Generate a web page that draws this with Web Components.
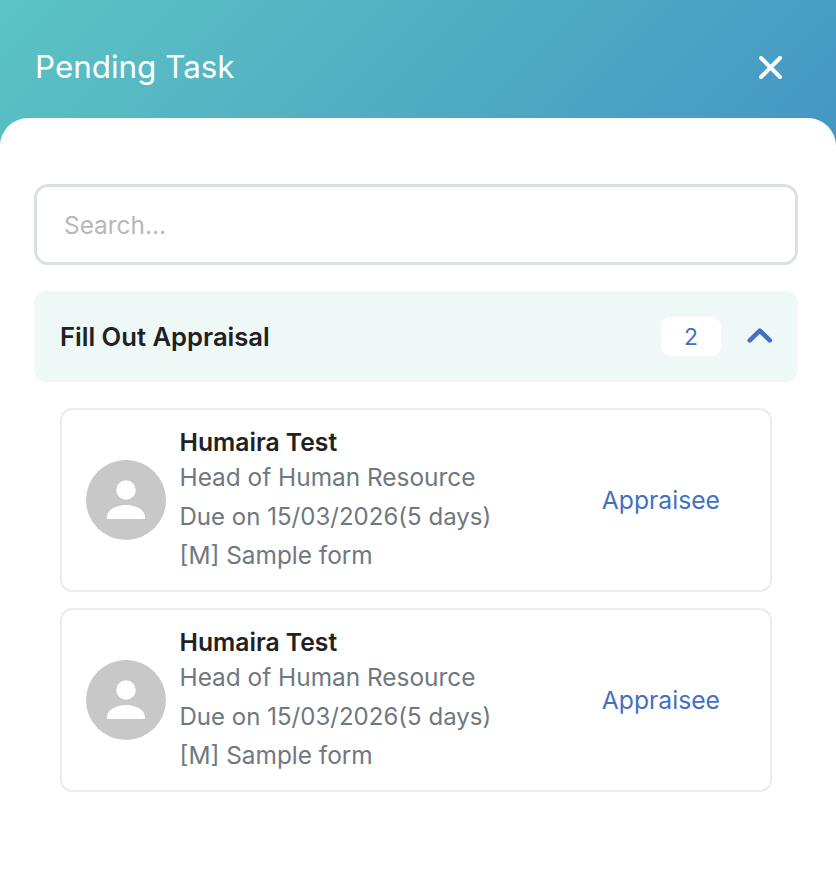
<!DOCTYPE html>
<html lang="en">
<head>
<meta charset="utf-8">
<title>Pending Task</title>
<style>
  html, body { margin: 0; background: #fff; }
  body { font-family: "Inter", "Noto Sans", sans-serif; }
</style>
</head>
<body>
<pending-panel>
  <task-group title="Fill Out Appraisal" count="2">
    <task-card name="Humaira Test" job="Head of Human Resource" due="Due on 15/03/2026(5 days)" form="[M] Sample form" role="Appraisee"></task-card>
    <task-card name="Humaira Test" job="Head of Human Resource" due="Due on 15/03/2026(5 days)" form="[M] Sample form" role="Appraisee"></task-card>
  </task-group>
</pending-panel>

<script>
const FONT = '"Inter", "Noto Sans", sans-serif';

class TaskCard extends HTMLElement {
  constructor() {
    super();
    this.attachShadow({ mode: 'open' });
  }

  connectedCallback() {
    this.render();
  }

  render() {
    const name = this.getAttribute('name') || '';
    const job = this.getAttribute('job') || '';
    const due = this.getAttribute('due') || '';
    const form = this.getAttribute('form') || '';
    const role = this.getAttribute('role') || '';

    this.shadowRoot.innerHTML = `
      <style>
        :host {
          display: block;
        }

        .card {
          box-sizing: border-box;
          height: 184px;
          display: flex;
          align-items: center;
          padding: 0 50px 0 24px;
          background: #fff;
          border: 2px solid #ececec;
          border-radius: 12px;
        }

        .avatar {
          flex: none;
          width: 80px;
          height: 80px;
          margin-right: 13.500px;
        }

        .info {
          flex: 1;
          min-width: 0;
          color: #6f777f;
          font-size: 24.4px;
          line-height: 39px;
        }

        .name {
          color: #1f2123;
          font-size: 24.7px;
          font-weight: 600;
          line-height: 32px;
        }

        .line {
          white-space: nowrap;
        }

        .due {
          font-size: 24px;
          letter-spacing: 0.02px;
        }

        .role {
          flex: none;
          color: #4470bf;
          font-size: 24.7px;
        }
      </style>
      <div class="card">
        <svg class="avatar" viewBox="0 0 80 80" aria-hidden="true">
          <circle cx="40" cy="40" r="40" fill="#c8c8c8"/>
          <circle cx="40" cy="30" r="9.700" fill="#fff"/>
          <path d="M21 59v-2c0-8 11-12 19-12s19 4 19 12v2z" fill="#fff"/>
        </svg>
        <div class="info">
          <div class="name">${name}</div>
          <div class="line">${job}</div>
          <div class="line due">${due}</div>
          <div class="line">${form}</div>
        </div>
        <span class="role">${role}</span>
      </div>
    `;
  }
}

class TaskGroup extends HTMLElement {
  constructor() {
    super();
    this.attachShadow({ mode: 'open' });
  }

  connectedCallback() {
    const title = this.getAttribute('title') || '';
    const count = this.getAttribute('count') || '0';

    this.shadowRoot.innerHTML = `
      <style>
        :host {
          display: block;
        }

        .head {
          height: 91px;
          display: flex;
          align-items: center;
          padding: 0 26px;
          background: #eef8f7;
          border-radius: 12px;
        }

        .title {
          flex: 1;
          color: #1f2123;
          font-size: 25.6px;
          font-weight: 600;
        }

        .count {
          width: 60px;
          height: 39px;
          display: flex;
          align-items: center;
          justify-content: center;
          margin-right: 25px;
          background: #fff;
          border-radius: 10px;
          color: #4470bf;
          font-size: 23px;
        }

        .chevron {
          display: block;
          width: 26px;
          height: 16px;
          margin-top: -3px;
          overflow: visible;
        }

        .items {
          display: flex;
          flex-direction: column;
          gap: 16px;
          padding: 26px 26px 0;
        }
      </style>
      <div class="head">
        <span class="title">${title}</span>
        <span class="count">${count}</span>
        <svg class="chevron" viewBox="0 0 26 16" aria-hidden="true">
          <path d="M3.800 13.400 13.800 3.600l10 9.800" fill="none" stroke="#4470bf" stroke-width="4.600" stroke-linecap="round" stroke-linejoin="round"/>
        </svg>
      </div>
      <div class="items"><slot></slot></div>
    `;
  }
}

class PendingPanel extends HTMLElement {
  constructor() {
    super();
    this.attachShadow({ mode: 'open' });
  }

  connectedCallback() {
    this.shadowRoot.innerHTML = `
      <style>
        :host {
          display: block;
          height: 888px;
          overflow: hidden;
          font-family: ${FONT};
          background: linear-gradient(135deg, #5cc4c3 0%, #4496c4 100%) 0 0 / 100% 150px no-repeat, #fff;
        }

        .top {
          height: 118px;
          box-sizing: border-box;
          display: flex;
          align-items: center;
          justify-content: space-between;
          padding: 16px 54px 0 35px;
          color: #fff;
        }

        .heading {
          font-size: 31.4px;
          font-weight: 400;
        }

        .close {
          display: block;
          width: 23px;
          height: 23px;
        }

        .sheet {
          height: 770px;
          box-sizing: border-box;
          padding: 66px 38px 0 34px;
          background: #fff;
          border-radius: 28px 28px 0 0;
        }

        .search {
          box-sizing: border-box;
          width: 100%;
          height: 81px;
          display: block;
          margin-bottom: 26px;
          padding: 0 27px;
          background: #fff;
          border: 3px solid #dbe1e2;
          border-radius: 14px;
          outline: none;
          color: #1f2123;
          font: 400 24.400px ${FONT};
        }

        .search::placeholder {
          color: #b8b8b8;
          opacity: 1;
        }
      </style>
      <div class="top">
        <span class="heading">Pending Task</span>
        <svg class="close" viewBox="0 0 23 23" aria-hidden="true">
          <path d="M2 2l19 19M21 2 2 21" fill="none" stroke="#fff" stroke-width="4" stroke-linecap="round"/>
        </svg>
      </div>
      <div class="sheet">
        <input class="search" type="text" placeholder="Search...">
        <slot></slot>
      </div>
    `;
  }
}

customElements.define('task-card', TaskCard);
customElements.define('task-group', TaskGroup);
customElements.define('pending-panel', PendingPanel);
</script>
</body>
</html>
